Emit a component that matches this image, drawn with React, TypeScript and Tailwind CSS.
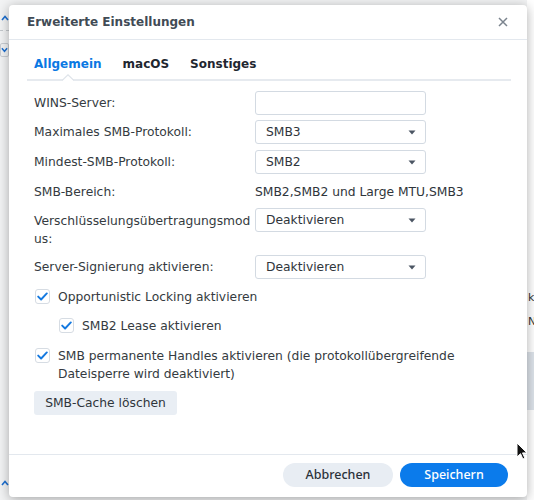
import type { ReactNode } from "react";

function Caret() {
  return (
    <svg width="8" height="5" viewBox="0 0 8 5" className="shrink-0">
      <path d="M0.5 0.5h7L4 4.5z" fill="#4b5563" />
    </svg>
  );
}

function Select({ value }: { value: string }) {
  return (
    <div className="flex h-[24px] w-[171px] items-center justify-between rounded-[3px] border border-[#d3dae2] bg-white pl-[10px] pr-[9px] text-[#2f353b]">
      <span>{value}</span>
      <Caret />
    </div>
  );
}

function Row({ label, children, className = "" }: { label: string; children: ReactNode; className?: string }) {
  return (
    <div className={`flex items-center ${className}`}>
      <div className="w-[221px] shrink-0 pr-[5px] text-[#353b41]">{label}</div>
      {children}
    </div>
  );
}

function Check({ children, className = "" }: { children: ReactNode; className?: string }) {
  return (
    <div className={`flex items-start leading-[18px] ${className}`}>
      <span className="mt-[1px] flex h-[15px] w-[15px] shrink-0 items-center justify-center rounded-[3px] border border-[#d6dce3] bg-white">
        <svg width="11" height="9" viewBox="0 0 11 9">
          <path d="M1.2 4.6l2.9 2.9L9.8 1.4" fill="none" stroke="#1479e0" strokeWidth="1.9" strokeLinecap="round" strokeLinejoin="round" />
        </svg>
      </span>
      <span className="ml-[8px] text-[#353b41]">{children}</span>
    </div>
  );
}

export default function App() {
  return (
    <div className="relative h-[500px] w-[534px] overflow-hidden bg-[#f2f3f4] font-['DejaVu_Sans',sans-serif] text-[12.3px]">
      {/* page behind the dialog */}
      <div className="absolute left-0 top-0 flex h-full w-[9px] flex-col items-center text-[#1c6fd1]">
        <svg width="8" height="6" viewBox="0 0 8 6" className="mt-[15px]">
          <path d="M1 5l3-3.5L7 5" fill="none" stroke="currentColor" strokeWidth="1.6" />
        </svg>
        <div className="mt-[9px] w-full border-t border-dashed border-[#c4c8cc]" />
        <div className="mt-[12px] flex h-[14px] w-[9px] items-center justify-center rounded-[2px] border border-[#c9cdd2]">
          <svg width="8" height="6" viewBox="0 0 8 6">
            <path d="M1 1l3 3.5L7 1" fill="none" stroke="currentColor" strokeWidth="1.6" />
          </svg>
        </div>
        <svg width="8" height="6" viewBox="0 0 8 6" className="mt-auto mb-[14px]">
          <path d="M1 5l3-3.5L7 5" fill="none" stroke="currentColor" strokeWidth="1.6" />
        </svg>
      </div>
      <div className="absolute right-0 top-0 flex h-full w-[7px] flex-col bg-white text-[11px] leading-[24px] text-[#333]">
        <div className="mt-[286px] pl-[1px]">k</div>
        <div className="pl-[1px]">N</div>
        <div className="mt-[18px] h-[58px] bg-[#dde3ea]" />
      </div>

      {/* dialog */}
      <div className="absolute left-[9px] top-[5px] flex h-[492px] w-[518px] flex-col rounded-[4px] bg-white shadow-[0_2px_12px_rgba(0,0,0,0.32)]">
        <div className="flex h-[35px] shrink-0 items-center justify-between border-b border-[#e3e8ee] pl-[18px] pr-[19px]">
          <span className="text-[12px] font-bold text-[#414b55]">Erweiterte Einstellungen</span>
          <svg width="10" height="10" viewBox="0 0 10 10">
            <path d="M1 1l8 8M9 1l-8 8" stroke="#7b848e" strokeWidth="1.5" />
          </svg>
        </div>

        <div className="flex flex-1 flex-col pl-[18px] pr-[16px]">
          <div className="relative flex h-[41px] shrink-0 items-end gap-[21px] border-b-2 border-[#e6eaef] pb-[6px] pl-[7px] text-[12px] font-bold leading-[18px]">
            <span className="text-[#0a78e3]">Allgemein</span>
            <span className="text-[#1f2730]">macOS</span>
            <span className="text-[#1f2730]">Sonstiges</span>
            <svg width="12" height="7" viewBox="0 0 12 7" className="absolute bottom-[-2px] left-[35px]">
              <path d="M0 7L6 1l6 6z" fill="#fff" />
              <path d="M0 6.5L6 0.8l6 5.7" fill="none" stroke="#dfe4ea" strokeWidth="1.2" />
            </svg>
          </div>

          <div className="flex flex-col pl-[7px] leading-[18px]">
            <Row label="WINS-Server:" className="mt-[10px]">
              <div className="h-[24px] w-[171px] rounded-[3px] border border-[#d3dae2] bg-white" />
            </Row>
            <Row label="Maximales SMB-Protokoll:" className="mt-[5px]">
              <Select value="SMB3" />
            </Row>
            <Row label="Mindest-SMB-Protokoll:" className="mt-[6px]">
              <Select value="SMB2" />
            </Row>
            <Row label="SMB-Bereich:" className="mt-[6px] h-[24px]">
              <span className="text-[#2f353b]">SMB2,SMB2 und Large MTU,SMB3</span>
            </Row>
            <div className="mt-[4px] flex items-start">
              <div className="w-[221px] shrink-0 break-all pr-[3px] pt-[4px] text-[#353b41]">
                Verschlüsselungsübertragungsmodus:
              </div>
              <Select value="Deaktivieren" />
            </div>
            <Row label="Server-Signierung aktivieren:" className="mt-[7px]">
              <Select value="Deaktivieren" />
            </Row>

            <Check className="mt-[9px] pl-[1px]">Opportunistic Locking aktivieren</Check>
            <Check className="mt-[11px] pl-[25px]">SMB2 Lease aktivieren</Check>
            <Check className="mt-[12px] pl-[1px]">
              SMB permanente Handles aktivieren (die protokollübergreifende Dateisperre wird deaktiviert)
            </Check>

            <div className="mt-[8px]">
              <button className="h-[24px] w-[143px] rounded-[3px] bg-[#e9eef4] text-[#2f353b]">SMB-Cache löschen</button>
            </div>
          </div>
        </div>

        <div className="flex h-[43px] shrink-0 items-start justify-end gap-[7px] border-t border-[#e3e8ee] pr-[19px] pt-[8px]">
          <button className="h-[24px] w-[110px] rounded-full bg-[#e8edf3] font-['Noto_Sans',sans-serif] text-[12.5px] font-medium text-[#2b323a]">
            Abbrechen
          </button>
          <button className="h-[24px] w-[108px] rounded-full bg-[#0b7beb] font-['Noto_Sans',sans-serif] text-[12.5px] font-medium text-white">
            Speichern
          </button>
        </div>
      </div>

      {/* mouse pointer */}
      <svg width="12" height="18" viewBox="0 0 12 18" className="absolute left-[516px] top-[442px]">
        <path d="M1 1v14l3.5-3.3 2.4 5.3 2-.9-2.4-5.2H11z" fill="#111" stroke="#fff" strokeWidth="1" />
      </svg>
    </div>
  );
}
